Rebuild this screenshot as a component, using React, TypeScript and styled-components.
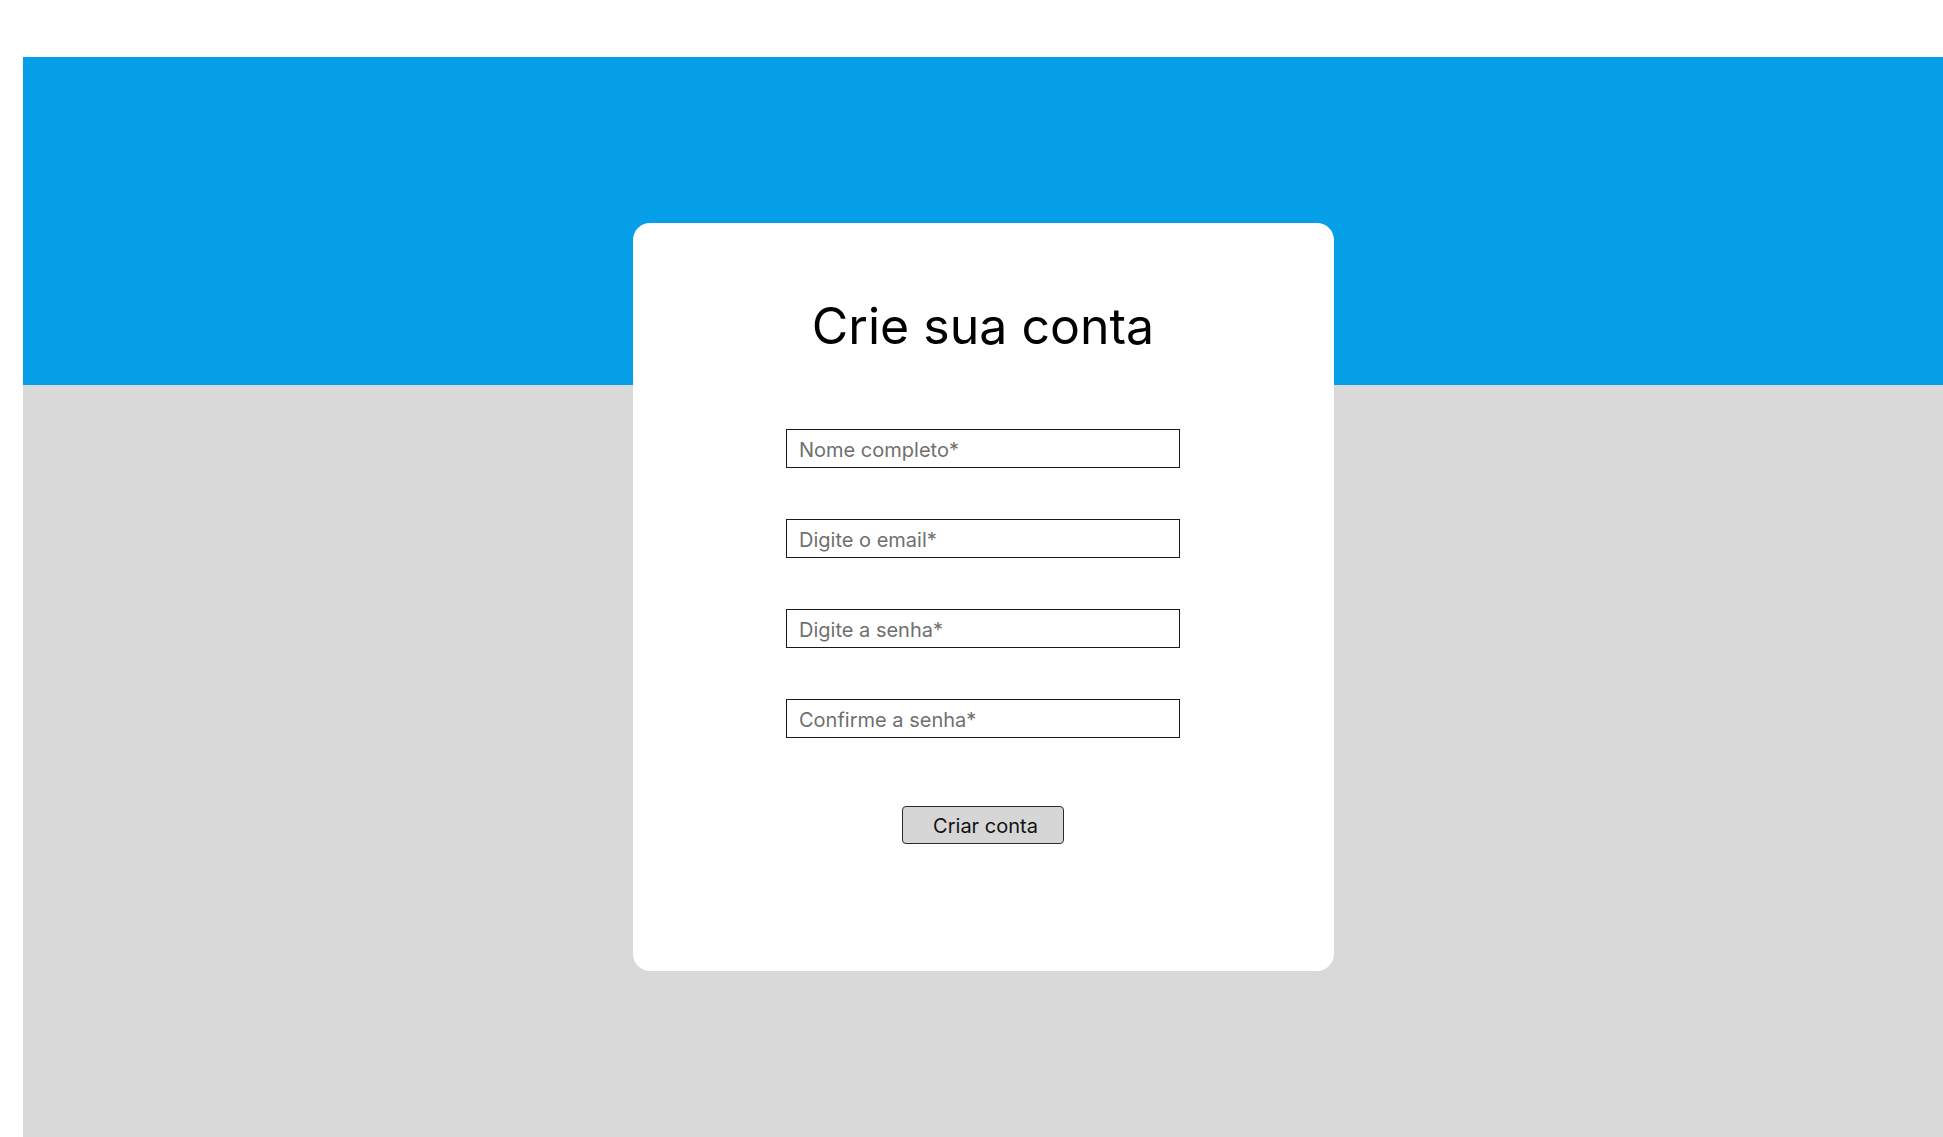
import React from "react";
import styled, {createGlobalStyle} from "styled-components";

const GlobalStyle = createGlobalStyle`
  html, body {
    margin: 0;
    padding: 0;
    background: #ffffff;
  }
  body {
    font-family: Inter, "Noto Sans", "Liberation Sans", sans-serif;
  }
`;

const Page = styled.div`
  padding: 57px 0 0 23px;
  min-height: 1137px;
  box-sizing: border-box;
  display: flex;
`;

const Main = styled.main`
  flex: 1;
  min-height: 1080px;
  background: linear-gradient(to bottom, #049fe6 0, #049fe6 328px, #d9d9d9 328px);
  display: flex;
  justify-content: center;
  align-items: flex-start;
  padding-top: 166px;
  box-sizing: border-box;
`;

const Card = styled.form`
  width: 701px;
  height: 748px;
  background: #ffffff;
  border-radius: 17px;
  box-sizing: border-box;
  padding-top: 72px;
  display: flex;
  flex-direction: column;
  align-items: center;
`;

const Title = styled.h1`
  margin: 0 0 71px;
  font-size: 50px;
  line-height: 63px;
  font-weight: 400;
  color: #000;
`;

const Fields = styled.div`
  display: flex;
  flex-direction: column;
  gap: 51px;
`;

const Input = styled.input`
  width: 394px;
  height: 39px;
  box-sizing: border-box;
  border: 1px solid #1a1a1a;
  border-radius: 0;
  padding: 2px 12px 0;
  font-family: Inter, "Noto Sans", sans-serif;
  font-size: 20px;
  color: #222;
  background: #fff;
  outline: none;

  &::placeholder {
    color: #6f6f6f;
  }
`;

const Button = styled.button`
  margin-top: 68px;
  width: 162px;
  height: 38px;
  box-sizing: border-box;
  border: 1px solid #2b2b2b;
  border-radius: 4px;
  background: #d6d6d6;
  font-family: Inter, "Noto Sans", sans-serif;
  font-size: 20px;
  color: #111;
  cursor: pointer;
  padding: 2px 0 0 5px;
`;

const App = () => {
    return (
        <>
            <GlobalStyle/>
            <Page>
                <Main>
                    <Card onSubmit={e => e.preventDefault()}>
                        <Title>Crie sua conta</Title>
                        <Fields>
                            <Input type="text" placeholder="Nome completo*"/>
                            <Input type="email" placeholder="Digite o email*"/>
                            <Input type="password" placeholder="Digite a senha*"/>
                            <Input type="password" placeholder="Confirme a senha*"/>
                        </Fields>
                        <Button type="submit">Criar conta</Button>
                    </Card>
                </Main>
            </Page>
        </>
    );
};

export default App;
